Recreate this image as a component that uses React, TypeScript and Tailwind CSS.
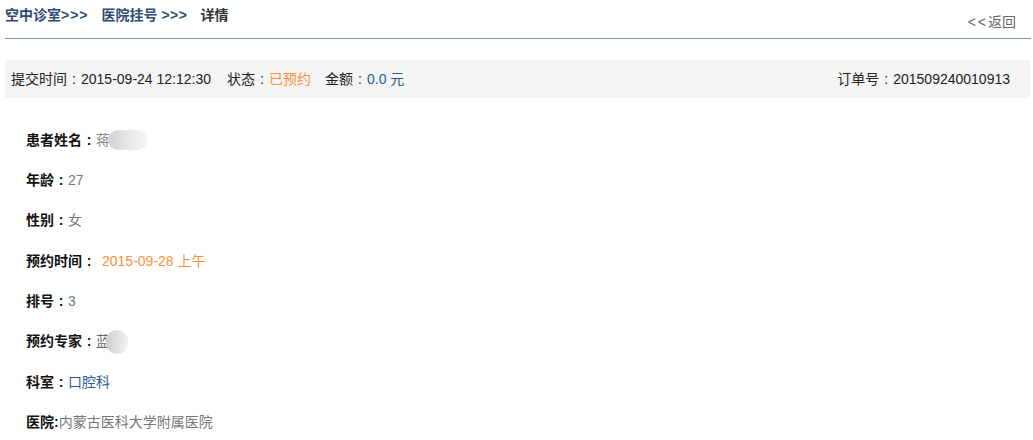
import React from 'react';

// full-width colon drawn centred, as the original font does
const C = () => <span className="inline-block w-[14px] text-center">:</span>;

const rows: { label: string; value: React.ReactNode }[] = [
  {
    label: '患者姓名',
    value: (
      <span className="flex items-center">
        <span className="text-[#888]">蒋</span>
        <span className="-ml-[2px] h-[20px] w-[40px] rounded-full bg-gradient-to-r from-[#d2d2d2] via-[#e8e8e8] to-[#f6f6f6]" />
      </span>
    ),
  },
  { label: '年龄', value: <span className="text-[#777]">27</span> },
  { label: '性别', value: <span className="text-[#777]">女</span> },
  {
    label: '预约时间',
    value: <span className="ml-[6px] text-[#f5913d]">2015-09-28 上午</span>,
  },
  { label: '排号', value: <span className="text-[#6b7a90]">3</span> },
  {
    label: '预约专家',
    value: (
      <span className="flex items-center">
        <span className="text-[#666]">蓝</span>
        <span className="-ml-[4px] h-[24px] w-[22px] rounded-full bg-gradient-to-r from-[#cdcdcd] to-[#f2f2f2]" />
      </span>
    ),
  },
  { label: '科室', value: <span className="text-[#2a5c9c]">口腔科</span> },
];

export default function App() {
  return (
    <div
      className="w-[1033px] h-[440px] bg-white overflow-hidden text-[14px] text-[#222]"
      style={{ fontFamily: '"Liberation Sans", "Noto Sans CJK SC", sans-serif' }}
    >
      <div className="ml-[5px] mr-[2px] flex items-end justify-between border-b border-[#7b93b5] h-[39px]">
        <div className="self-start mt-[5px] flex items-center font-bold text-[14px] text-[#2d4c73]">
          <span>空中诊室<span className="tracking-[1px]">&gt;&gt;&gt;</span></span>
          <span className="ml-[13px]">医院挂号 <span className="tracking-[0.5px]">&gt;&gt;&gt;</span></span>
          <span className="ml-[13px] text-[#333]">详情</span>
        </div>
        <div className="mb-[5px] mr-[15px] text-[14px] text-[#666]">
          <span className="tracking-[2px]">&lt;&lt;</span>返回
        </div>
      </div>

      <div className="ml-[5px] mr-[3px] mt-[21px] flex h-[38px] items-center justify-between bg-[#f4f4f4] pl-[6px] pr-[20px]">
        <div className="flex items-center">
          <span>提交时间<C />2015-09-24 12:12:30</span>
          <span className="ml-[16px]">状态<C /></span>
          <span className="text-[#f5913d]">已预约</span>
          <span className="ml-[14px]">金额<C /></span>
          <span className="text-[#2a5c9c]">0.0 元</span>
        </div>
        <div>订单号<C />201509240010913</div>
      </div>

      <div className="mt-[30px] flex flex-col gap-[16.4px] pl-[26px]">
        {rows.map((r) => (
          <div key={r.label} className="flex h-[24px] items-center">
            <span className="font-bold text-[#111]">{r.label}<C /></span>
            {r.value}
          </div>
        ))}
        <div className="flex h-[24px] items-center">
          <span className="font-bold text-[#111]">医院:</span>
          <span className="text-[#777]">内蒙古医科大学附属医院</span>
        </div>
      </div>
    </div>
  );
}
